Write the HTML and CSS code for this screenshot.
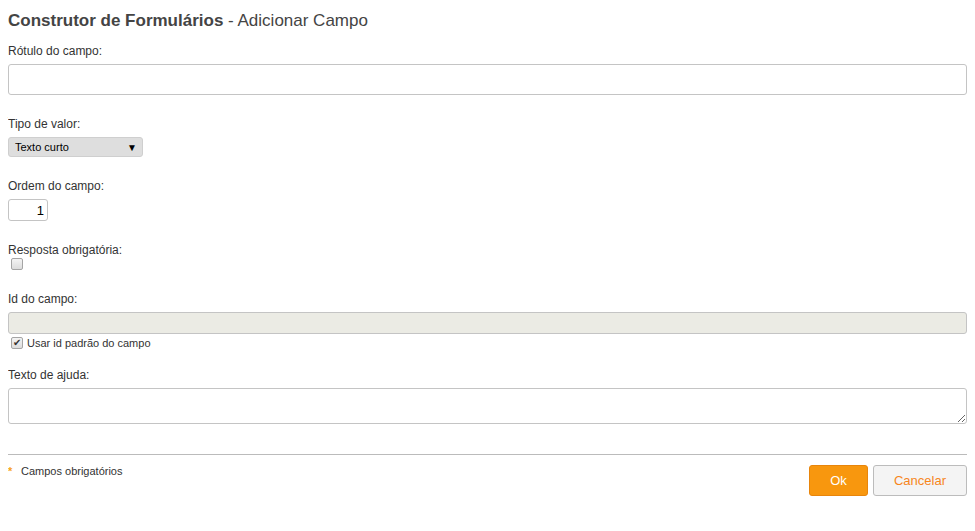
FILE: index.html
```html
<!DOCTYPE html>
<html lang="pt">
<head>
<meta charset="utf-8">
<title>Construtor de Formulários</title>
<link rel="stylesheet" href="styles.css">
</head>
<body>
<h1 class="title"><strong>Construtor de Formulários</strong> - Adicionar Campo</h1>
<form class="form">
  <div class="field">
    <label class="label" for="rotulo">Rótulo do campo:</label>
    <input class="text text-lg" id="rotulo" type="text">
  </div>
  <div class="field">
    <label class="label" for="tipo">Tipo de valor:</label>
    <div class="select" id="tipo"><span>Texto curto</span><span class="arrow">▼</span></div>
  </div>
  <div class="field">
    <label class="label" for="ordem">Ordem do campo:</label>
    <input class="text num" id="ordem" type="text" value="1">
  </div>
  <div class="field">
    <label class="label">Resposta obrigatória:</label>
    <span class="check"></span>
  </div>
  <div class="field field-id">
    <label class="label" for="idc">Id do campo:</label>
    <input class="text disabled" id="idc" type="text" disabled>
    <div class="check-row"><span class="check checked">✔</span><span>Usar id padrão do campo</span></div>
  </div>
  <div class="field">
    <label class="label" for="ajuda">Texto de ajuda:</label>
    <textarea class="area" id="ajuda"></textarea>
  </div>
  <div class="footer">
    <div class="note"><span class="star">*</span>Campos obrigatórios</div>
    <div class="buttons">
      <button type="button" class="btn btn-ok">Ok</button>
      <button type="button" class="btn btn-cancel">Cancelar</button>
    </div>
  </div>
</form>
</body>
</html>
```
FILE: styles.css
```css
html, body { background: #fff; }
body {
  margin: 8px;
  font-family: "Liberation Sans", Arial, sans-serif;
  color: #333;
}
.title {
  margin: 2px 0 11px;
  font-size: 17px;
  line-height: 22px;
  font-weight: normal;
  color: #444;
}
.title strong { font-weight: bold; }
.form { display: flex; flex-direction: column; }
.field { display: flex; flex-direction: column; align-items: flex-start; margin-bottom: 21px; }
.field-id { margin-bottom: 17px; }
.label {
  display: block;
  font-size: 12px;
  line-height: 16px;
  margin-bottom: 5px;
}
.text {
  box-sizing: border-box;
  border: 1px solid #c4c4c4;
  border-radius: 3px;
  background: #fff;
  font-family: "Liberation Sans", Arial, sans-serif;
  font-size: 12px;
  height: 22px;
  margin: 0;
  padding: 2px 4px;
  outline: none;
}
.text-lg { width: 100%; height: 31px; }
.disabled { width: 100%; background: #ebebe4; }
.num { width: 40px; text-align: right; font-size: 13px; color: #000; padding: 2px 3px; }
.select {
  box-sizing: border-box;
  width: 135px;
  height: 20px;
  display: flex;
  align-items: center;
  justify-content: space-between;
  padding: 0 6px;
  background: #dedede;
  border: 1px solid #cfcfcf;
  border-radius: 3px;
  font-size: 11px;
  color: #000;
}
.arrow { font-size: 10px; margin-right: -1px; }
.check {
  box-sizing: border-box;
  display: inline-flex;
  align-items: center;
  justify-content: center;
  width: 12px;
  height: 12px;
  margin-left: 3px;
  border: 1px solid #a5a5a5;
  border-radius: 2px;
  background: linear-gradient(#f4f4f4, #dcdcdc);
  font-size: 10px;
  line-height: 1;
  color: #333;
}
.field > .check { margin-top: -5px; }
.check-row {
  display: flex;
  align-items: center;
  margin-top: 2px;
  font-size: 11px;
  line-height: 14px;
  color: #333;
  gap: 4px;
}
.area {
  box-sizing: border-box;
  width: 100%;
  height: 36px;
  border: 1px solid #c4c4c4;
  border-radius: 3px;
  margin: 0;
  font-family: "Liberation Sans", Arial, sans-serif;
  font-size: 12px;
  outline: none;
}
.footer {
  display: flex;
  justify-content: space-between;
  align-items: flex-start;
  margin-top: 9px;
  border-top: 1px solid #bbb;
  padding-top: 10px;
}
.note { font-size: 11px; line-height: 13px; color: #333; }
.star { color: #f7a21b; font-weight: bold; display: inline-block; width: 13px; }
.buttons { display: flex; gap: 5px; }
.btn {
  box-sizing: border-box;
  height: 31px;
  border-radius: 3px;
  font-family: "Liberation Sans", Arial, sans-serif;
  font-size: 13px;
  padding: 0;
  cursor: pointer;
}
.btn-ok { width: 59px; background: #f8970e; border: 1px solid #e8850b; color: #fff; }
.btn-cancel { width: 94px; background: #f4f4f4; border: 1px solid #bcbcbc; color: #f7861c; }
```
